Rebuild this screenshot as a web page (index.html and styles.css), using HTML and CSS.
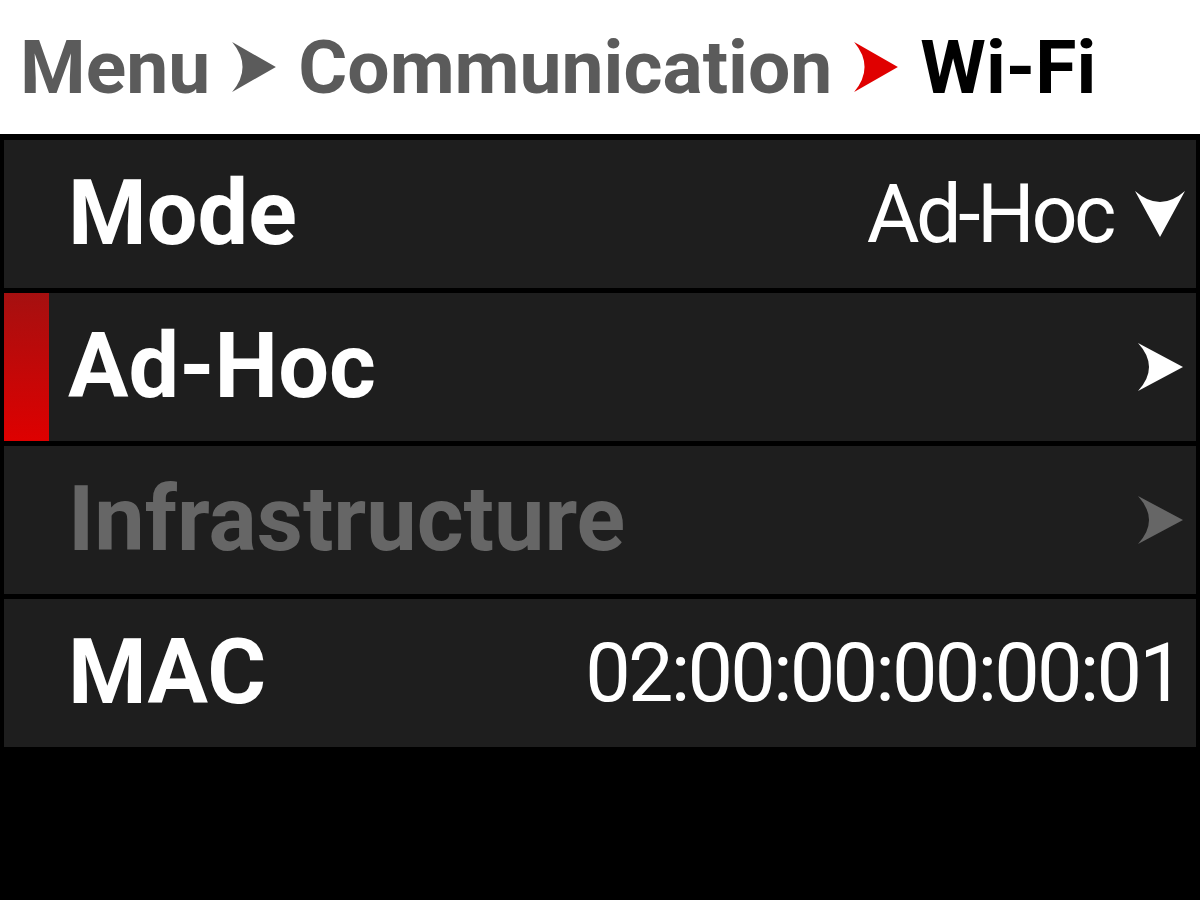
FILE: index.html
```html
<!DOCTYPE html>
<html lang="en">
<head>
  <meta charset="UTF-8">
  <title>Wi-Fi</title>
  <link rel="stylesheet" href="styles.css">
</head>
<body>
  <div class="crumbs">
    <span>Menu</span>
    <svg class="sep" viewBox="0 0 42 48"><path d="M0 0 L42 24 L0 48 Q20 24 0 0 Z"/></svg>
    <span>Communication</span>
    <svg class="sep red" viewBox="0 0 42 48"><path d="M0 0 L42 24 L0 48 Q20 24 0 0 Z"/></svg>
    <span class="current">Wi-Fi</span>
  </div>

  <div class="list">
    <div class="row">
      <span class="label">Mode</span>
      <span class="value">Ad-Hoc</span>
      <svg class="drop" viewBox="0 0 50 46"><path d="M0 0 Q25 22 50 0 L25 46 Z"/></svg>
    </div>
    <div class="row selected">
      <span class="label">Ad-Hoc</span>
      <svg class="go" viewBox="0 0 45 48"><path d="M0 0 L45 24 L0 48 Q22 24 0 0 Z"/></svg>
    </div>
    <div class="row disabled">
      <span class="label">Infrastructure</span>
      <svg class="go" viewBox="0 0 45 48"><path d="M0 0 L45 24 L0 48 Q22 24 0 0 Z"/></svg>
    </div>
    <div class="row">
      <span class="label">MAC</span>
      <span class="value mac">02:00:00:00:00:01</span>
    </div>
  </div>
</body>
</html>
```

FILE: styles.css
```css
body {
  margin: 0;
  background-color: #000;
  font-family: Roboto, 'Liberation Sans', sans-serif;
  height: 900px;
  overflow: hidden;
}
.crumbs {
  height: 134px;
  background-color: #fff;
  display: flex;
  align-items: center;
  gap: 22px;
  padding-left: 20px;
  font-size: 75px;
  font-weight: bold;
  color: #5b5b5b;
  line-height: 1;
}
.crumbs .current {
  color: #000;
}
.sep {
  width: 44px;
  height: 50px;
  fill: #5b5b5b;
}
.sep.red {
  fill: #e00000;
}
.list {
  display: flex;
  flex-direction: column;
  gap: 5px;
  padding: 6px 4px 0 4px;
}
.row {
  position: relative;
  height: 148px;
  background-color: #1e1e1e;
  display: flex;
  align-items: center;
  padding: 0 13px 0 64px;
  color: #fff;
  line-height: 1;
}
.row.selected::before {
  content: "";
  position: absolute;
  left: 0;
  top: 0;
  bottom: 0;
  width: 45px;
  background: linear-gradient(#a51010, #de0000);
}
.label {
  font-size: 90px;
  font-weight: bold;
  flex: 1;
}
.value {
  font-size: 81px;
  letter-spacing: -3.5px;
}
.mac {
  letter-spacing: -2.8px;
  margin-right: 1px;
}
.drop {
  width: 50px;
  height: 46px;
  fill: #fff;
  margin-left: 22px;
  margin-right: -2px;
}
.go {
  width: 45px;
  height: 48px;
  fill: #fff;
}
.disabled {
  color: #666;
}
.disabled .go {
  fill: #666;
}
```
